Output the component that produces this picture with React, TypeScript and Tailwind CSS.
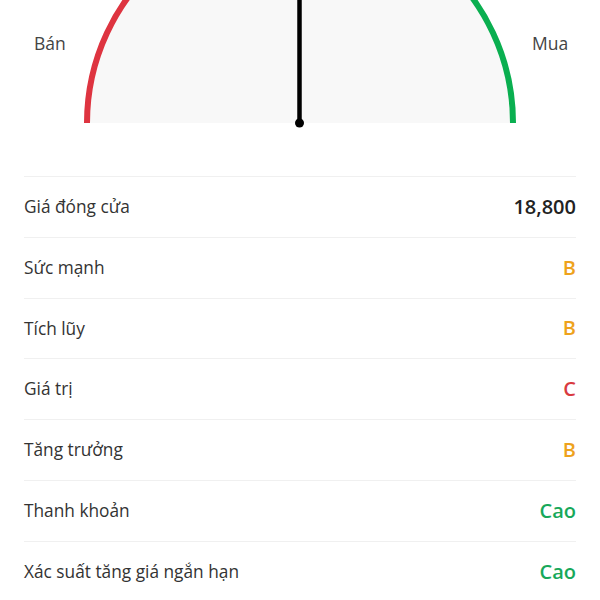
import React from "react";

const rows: { label: string; value: string; cls: string }[] = [
  { label: "Giá đóng cửa", value: "18,800", cls: "text-[#222222]" },
  { label: "Sức mạnh", value: "B", cls: "text-[#eea21b]" },
  { label: "Tích lũy", value: "B", cls: "text-[#eea21b]" },
  { label: "Giá trị", value: "C", cls: "text-[#d93a40]" },
  { label: "Tăng trưởng", value: "B", cls: "text-[#eea21b]" },
  { label: "Thanh khoản", value: "Cao", cls: "text-[#17a85a]" },
  { label: "Xác suất tăng giá ngắn hạn", value: "Cao", cls: "text-[#17a85a]" },
];

function Gauge() {
  return (
    <svg width="432" height="130" viewBox="84 0 432 130" className="block shrink-0">
      <path d="M87 123 A213 213 0 0 1 513 123 Z" fill="#f8f8f8" />
      <path d="M87 123 A213 213 0 0 1 163.1 -40.2" fill="none" stroke="#de3440" strokeWidth="6" />
      <path d="M436.9 -40.2 A213 213 0 0 1 513 123" fill="none" stroke="#0aaf50" strokeWidth="6" />
      <line x1="299.5" y1="-100" x2="299.5" y2="123" stroke="#000" strokeWidth="4.5" />
      <circle cx="299.5" cy="123" r="4.5" fill="#000" />
    </svg>
  );
}

export default function App() {
  return (
    <div className="w-[600px] h-[600px] overflow-hidden bg-white" style={{ fontFamily: '"Open Sans", "Noto Sans", sans-serif' }}>
      <div className="flex h-[176px] items-start">
        <div className="w-[84px] pl-[34px] pt-[31px] text-[17.5px] leading-[24px] text-[#444444]">Bán</div>
        <Gauge />
        <div className="pl-[16px] pt-[31px] text-[17.5px] leading-[24px] text-[#444444]">Mua</div>
      </div>
      <div className="px-6">
        {rows.map((r) => (
          <div key={r.label} className="flex h-[60.8px] items-center justify-between border-t border-[#f0f0f0]">
            <span className="text-[17.3px] text-[#333333]">{r.label}</span>
            <span className={`text-[20px] font-semibold ${r.cls}`}>{r.value}</span>
          </div>
        ))}
      </div>
    </div>
  );
}
